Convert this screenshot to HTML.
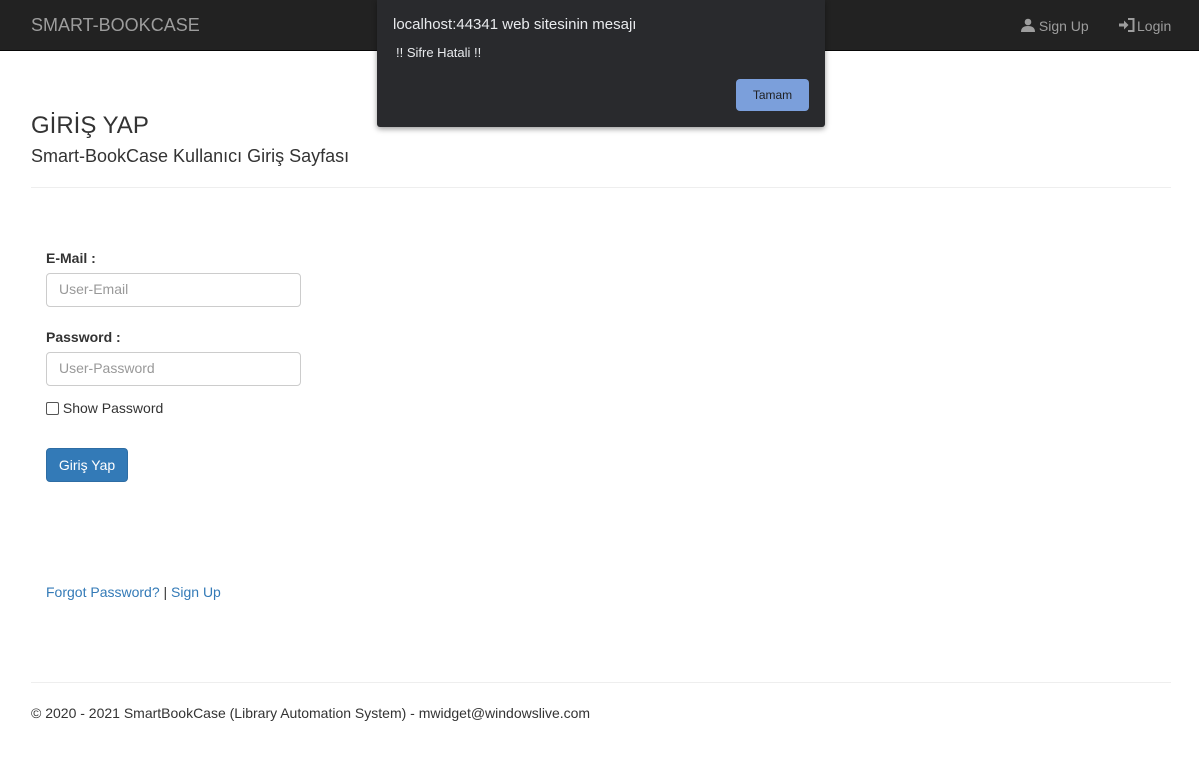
<!DOCTYPE html>
<html><head><meta charset="utf-8"><style>
*{box-sizing:border-box}
body{margin:0;width:1199px;height:771px;background:#fff;font-family:"Liberation Sans",sans-serif;font-size:14px;color:#333;position:relative;overflow:hidden}
.nav{position:absolute;left:0;top:0;width:1199px;height:51px;background:#222;border-bottom:1px solid #080808}
.brand{position:absolute;left:31px;top:15px;font-size:18px;color:#9d9d9d}
.nl{position:absolute;top:18px;color:#9d9d9d;font-size:14px}
h1{position:absolute;left:31px;top:112px;margin:0;font-size:24px;font-weight:400;color:#333}
.sub{position:absolute;left:31px;top:146px;font-size:18px;color:#333}
.hr{position:absolute;left:31px;width:1140px;height:1px;background:#eee}
label{position:absolute;left:46px;font-weight:bold}
.inp{position:absolute;left:46px;width:255px;height:34px;border:1px solid #ccc;border-radius:4px;padding:7px 12px;color:#999;font-size:14px}
.btn{position:absolute;left:46px;top:448px;width:82px;height:34px;background:#337ab7;border:1px solid #2e6da4;border-radius:4px;color:#fff;text-align:center;line-height:32px}
a{color:#337ab7;text-decoration:none}
.dlg{position:absolute;left:377px;top:0;width:448px;height:127px;background:#292a2d;box-shadow:0 2px 6px rgba(0,0,0,.4);border-radius:0 0 3px 3px;font-family:"Liberation Sans",sans-serif}
.dlg .t{position:absolute;left:16px;top:16px;color:#e8eaed;font-size:15px}
.dlg .m{position:absolute;left:19px;top:45px;color:#e8eaed;font-size:13px}
.dlg .b{position:absolute;left:359px;top:79px;width:73px;height:32px;background:#7b9fdb;border-radius:4px;color:#202124;font-size:12px;text-align:center;line-height:32px}
</style></head><body>
<div class="nav">
<div class="brand">SMART-BOOKCASE</div>
<div class="nl" style="left:1021px"><svg width="14" height="14" viewBox="0 0 14 14" style="vertical-align:-1px"><circle cx="7" cy="4" r="3.3" fill="#9d9d9d"/><path d="M0 14 Q0 8 7 8 Q14 8 14 14Z" fill="#9d9d9d"/></svg> Sign Up</div>
<div class="nl" style="left:1119px"><svg width="16" height="14" viewBox="0 0 16 14" style="vertical-align:-1px"><path d="M0 5.5H5V2.5L9.5 7 5 11.5V8.5H0Z" fill="#9d9d9d"/><path d="M9 1H14.5V13H9" stroke="#9d9d9d" stroke-width="2" fill="none"/></svg><span style="margin-left:2px">Login</span></div>
</div>
<h1>GİRİŞ YAP</h1>
<div class="sub">Smart-BookCase Kullanıcı Giriş Sayfası</div>
<div class="hr" style="top:187px"></div>
<label style="top:250px">E-Mail :</label>
<div class="inp" style="top:273px">User-Email</div>
<label style="top:329px">Password :</label>
<div class="inp" style="top:352px">User-Password</div>
<div style="position:absolute;left:46px;top:400px"><span style="display:inline-block;width:13px;height:13px;border:1px solid #555;border-radius:2px;vertical-align:-2px"></span> Show Password</div>
<div class="btn">Giriş Yap</div>
<div style="position:absolute;left:46px;top:584px"><a>Forgot Password?</a> | <a>Sign Up</a></div>
<div class="hr" style="top:682px"></div>
<div style="position:absolute;left:31px;top:705px">© 2020 - 2021 SmartBookCase (Library Automation System) - mwidget@windowslive.com</div>
<div class="dlg"><div class="t">localhost:44341 web sitesinin mesajı</div><div class="m">!! Sifre Hatali !!</div><div class="b">Tamam</div></div>
</body></html>
